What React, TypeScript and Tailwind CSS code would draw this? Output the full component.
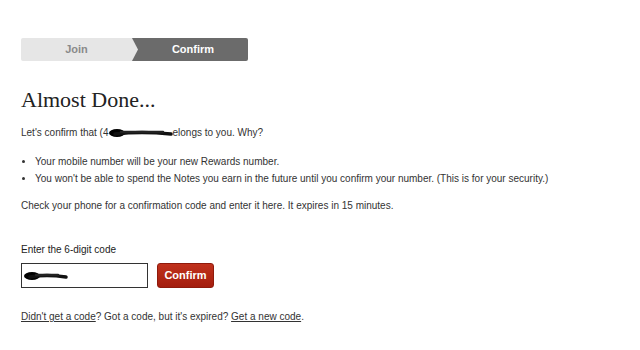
const body = "font-['Liberation_Sans',Arial,sans-serif] text-[10px] text-[#333]";

function Steps() {
  return (
    <div className="flex h-[23px] w-[227px] overflow-hidden rounded-[2px] text-[11px] font-bold">
      <div className="relative flex w-[111px] items-center justify-center bg-[#e6e6e6] text-[#8a8a8a]">
        Join
        <svg
          className="absolute right-[-7px] top-0 z-10"
          width="8"
          height="23"
          viewBox="0 0 8 23"
        >
          <path d="M0 0 L1 0 L7 11.5 L1 23 L0 23 Z" fill="#e6e6e6" />
        </svg>
      </div>
      <div className="flex flex-1 items-center justify-center bg-[#6b6b6b] pl-[6px] text-white">
        Confirm
      </div>
    </div>
  );
}

// black marker scribble that hides the phone number
function Scribble({ w }: { w: number }) {
  return (
    <svg width={w} height="10" viewBox={`0 0 ${w} 10`} className="inline-block align-middle">
      <ellipse cx="8" cy="5" rx="8" ry="4" fill="#000" />
      <path d={`M6 6 Q ${w / 2} 3 ${w - 2} 6`} stroke="#111" strokeWidth="3.5" fill="none" strokeLinecap="round" />
      <path d={`M12 4 L ${w - 10} 4`} stroke="#222" strokeWidth="2.5" strokeLinecap="round" />
    </svg>
  );
}

export default function App() {
  return (
    <div className={`min-h-[350px] w-[640px] bg-white pl-[21px] pt-[38px] ${body}`}>
      <Steps />

      <h1 className="mt-[25px] font-['Liberation_Serif','Times_New_Roman',serif] text-[22px] leading-[28px] text-[#222]">
        Almost Done...
      </h1>

      <p className="mt-[12px] leading-[14px]">
        Let's confirm that (4
        <Scribble w={64} />
        elongs to you. Why?
      </p>

      <ul className="mt-[13px] list-disc pl-[14px] leading-[17px]">
        <li>Your mobile number will be your new Rewards number.</li>
        <li>
          You won't be able to spend the Notes you earn in the future until you confirm your number. (This is for your security.)
        </li>
      </ul>

      <p className="mt-[12px] leading-[14px]">
        Check your phone for a confirmation code and enter it here. It expires in 15 minutes.
      </p>

      <div className="mt-[30px] leading-[14px] text-[#222]">Enter the 6-digit code</div>

      <div className="mt-[6px] flex items-center gap-[9px]">
        <div className="flex h-[25px] w-[127px] items-center border border-[#333] bg-white pl-[2px]">
          <Scribble w={44} />
        </div>
        <button className="h-[25px] w-[57px] rounded-[3px] border border-[#8f1a0c] bg-gradient-to-b from-[#c0311c] to-[#a41d0e] text-[11px] font-bold text-white">
          Confirm
        </button>
      </div>

      <p className="mt-[22px] leading-[14px]">
        <a className="underline">Didn't get a code</a>? Got a code, but it's expired?{" "}
        <a className="underline">Get a new code</a>.
      </p>
    </div>
  );
}
